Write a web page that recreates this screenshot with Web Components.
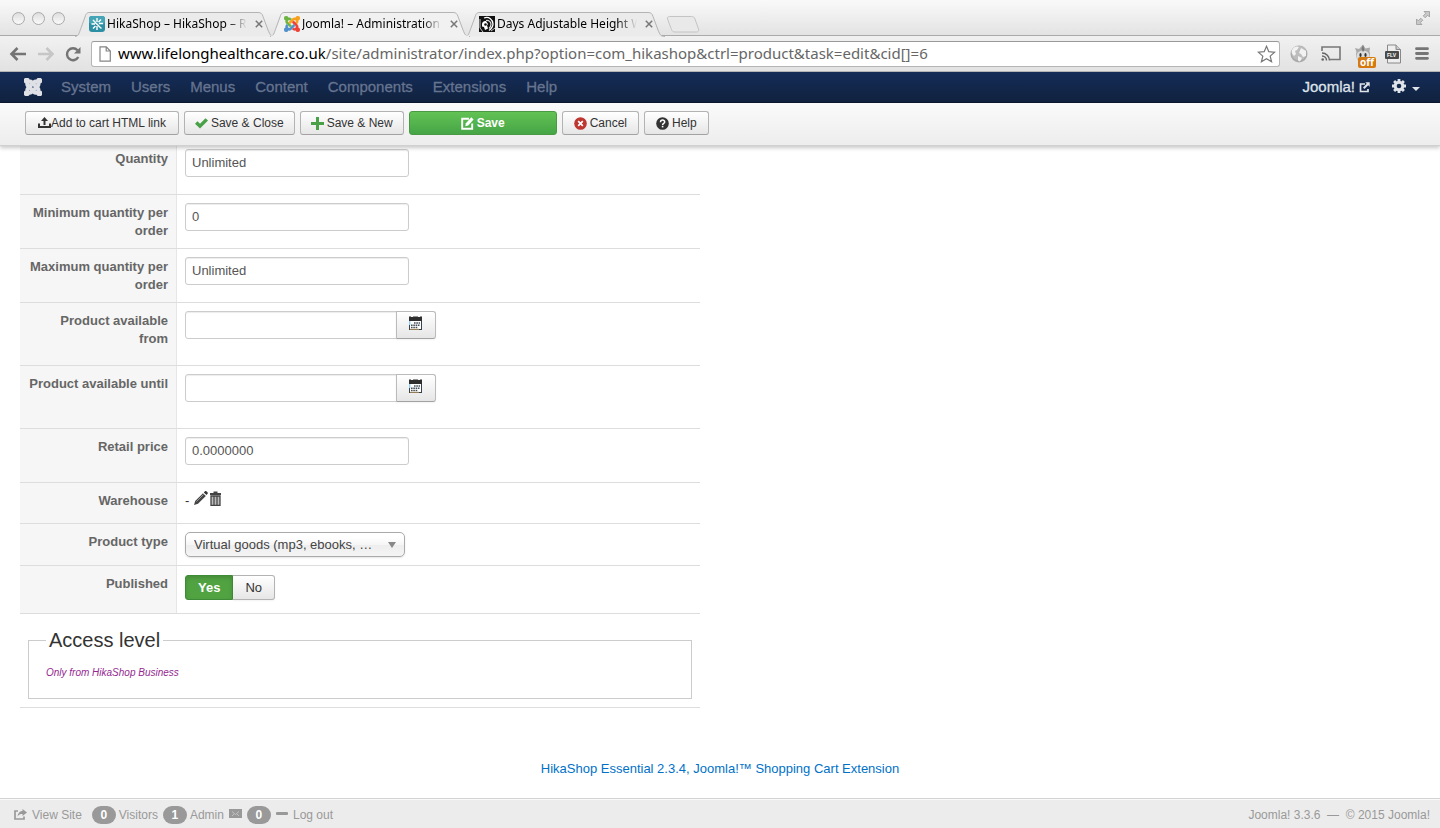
<!DOCTYPE html>
<html lang="en">
<head>
<meta charset="utf-8">
<title>Joomla! - Administration - Product</title>
<style>
body{margin:0;background:#fff;color:#333;font:13px/18px "Liberation Sans",Arial,sans-serif}
</style>
</head>
<body>
<admin-window></admin-window>
<script>
const J = [
  'M.6 92.1C.6 58.8 27.4 32 60.4 32c30 0 54.5 21.9 59.2 50.2 32.6-7.6 67.1.6 96.5 30l-44.3 44.3c-20.5-20.5-42.6-16.3-55.4-3.5-14.3 14.3-14.3 37.9 0 52.2l99.5 99.5-44 44.3c-87.7-87.2-49.7-49.7-99.8-99.7-26.8-26.5-35-64.8-24.8-98.9C20.4 144.6.6 120.7.6 92.1z',
  'M130.1 208.5l44.3 44.3c10-10 89.7-89.7 99.7-99.8 14.3-14.3 37.6-14.3 51.9 0 12.8 12.8 17 35-3.5 55.4l44 44.3c31.2-31.2 38.5-67.6 28.9-101.2 29.2-4.1 51.9-29.2 51.9-59.5 0-33.2-26.8-60.1-59.8-60.1-30.3 0-55.4 22.5-59.5 51.6-33.8-9.9-71.7-1.5-98.3 25.1-18.3 19.1-71.1 71.5-99.6 99.9z',
  'M396.4 360.7c8.2-32.7-.9-68.5-26.3-93.9-11.8-12.2 5 4.7-99.5-99.7l-44.3 44.3 99.7 99.7c14.3 14.3 14.3 37.6 0 51.9-12.8 12.8-35 17-55.4-3.5l-44 44.3c27.6 30.2 68 38.8 102.7 28 5.5 27.4 29.7 48.1 58.9 48.1 33 0 59.8-26.8 59.8-60.1 0-30.2-22.5-55-51.6-59.1z',
  'M312.1 307.6l-44-44.3c-87 86.4-50.4 50.4-99.7 99.8-14.3 14.3-37.6 14.3-51.9 0-13.1-13.4-16.9-35.3 3.2-55.4l-44-44.3c-30.2 30.2-38 65.2-29.5 98.3-26.7 6-46.2 29.9-46.2 58.2C0 453.2 26.8 480 59.8 480c28.6 0 52.5-19.8 58.6-46.7 32.7 8.2 68.5-.6 94.2-26 32.1-32 12.2-12.4 99.5-99.7z'];
const joomla = (c, w) => J.map((d, i) => `<path fill="${c[i]}" stroke="${c[i]}" stroke-width="${w}" d="${d}"/>`).join('');

/* name: [viewBox, width, height, markup] */
const ICONS = {
  joomla: ['-12 20 472 472', 18, 18, joomla(['#dfe1e6', '#dfe1e6', '#dfe1e6', '#dfe1e6'], 42)],
  'fav-joomla': ['0 32 448 448', 16, 16, joomla(['#6cb33f', '#f9a01b', '#ee4035', '#4f8fcc'], 12)],
  'fav-hika': ['0 0 16 16', 16, 16, '<rect width="16" height="16" rx="3" fill="#2d8fa3"/><rect width="16" height="8" rx="3" fill="#45a5b7"/><path d="M8 2v4M8 10v4M2.500 8H6M10 7.500h4M4 4l2.500 2.500M12 3.500L9.500 6M4 12.500L6.500 10M9.500 10l3 2.500M6 6.500l4 3.500" stroke="#fff" stroke-width="1.400" fill="none"/>'],
  'fav-days': ['0 0 16 16', 16, 16, '<rect width="16" height="16" fill="#111"/><path d="M5 2c5-2 9 2 9 6 0 3-2 5-4 6.500" stroke="#fff" stroke-width="1.300" fill="none"/><path d="M7 4.500c3-.5 5 1.500 5 4 0 2-1 3-2 4" stroke="#ddd" stroke-width="1.200" fill="none"/><path d="M3 8c0-2 2-3.500 4-3l2 3-1 1.500 1 3-3 1.500-1-3-2-.5z" fill="#fff"/><circle cx="6.500" cy="8.500" r="1.300" fill="#111"/><path d="M1 3v9l3 4M12 15l4-3" stroke="#ccc" stroke-width="1" fill="none"/>'],
  back: ['0 0 18 16', 18, 16, '<path d="M2.500 8H17M8.500 2L2.500 8l6 6" fill="none" stroke="#747474" stroke-width="2.600"/>'],
  forward: ['0 0 18 16', 18, 16, '<path d="M1 8h14.500M9.500 2l6 6-6 6" fill="none" stroke="#c6c6c6" stroke-width="2.600"/>'],
  reload: ['0 0 16 16', 16, 16, '<path d="M13.300 11A6 6 0 1 1 12.500 4.200" fill="none" stroke="#747474" stroke-width="2.400"/><path d="M15.500 1v6.500H9z" fill="#747474"/>'],
  page: ['0 0 12 16', 12, 16, '<path d="M1 .8h6.300L11.300 5v10.200H1zM7.200.8V5h4" fill="#fff" stroke="#858585" stroke-width="1.200"/>'],
  star: ['0 0 19 18', 19, 18, '<path d="M9.500 1.300l2.300 5.400 5.900.5-4.500 3.900 1.400 5.700-5.100-3-5.100 3 1.400-5.700L1.300 7.200l5.900-.5z" fill="#fff" stroke="#777" stroke-width="1.200"/>'],
  globe: ['0 0 18 18', 18, 18, '<circle cx="9" cy="9" r="8.500" fill="#aaa"/><circle cx="9" cy="8" r="7.300" fill="#bdbdbd"/><path d="M2 5c2-4 5-4 7-3L7 5 5 6l1 3-2 2C2 9 1 7 2 5zM11 3l5 3v5l-3 1-2-3-2-1zM8 11l4 2-2 3.500-2-1z" fill="#f2f2f2"/>'],
  cast: ['0 0 20 15', 20, 15, '<path d="M1 5V1h18v12.500H9" fill="none" stroke="#777" stroke-width="1.600"/><path d="M1 7a7.500 7.500 0 0 1 7.500 7.500M1 10a4.500 4.500 0 0 1 4.500 4.500" fill="none" stroke="#666" stroke-width="1.500"/><circle cx="1.700" cy="13.500" r="1.300" fill="#666"/>'],
  ghost: ['0 0 18 20', 18, 20, '<path d="M9 .5l2.500 4L16 3.500l-.5 4c2 5-1.500 11-6.500 11S.5 12.500 2.500 8L1 4l4 1z" fill="#a9a9a9"/><ellipse cx="9" cy="12" rx="6.500" ry="5.500" fill="#dcdcdc"/><path d="M9 1l1.500 5L9 8 7.500 5z" fill="#777"/><ellipse cx="6.500" cy="11" rx="1.100" ry="2" fill="#333"/><ellipse cx="11.500" cy="11" rx="1.100" ry="2" fill="#333"/>'],
  flv: ['0 0 17 20', 17, 20, '<path d="M2.500 1h8.500l4.500 4.500V19h-13z" fill="#eee" stroke="#888"/><path d="M11 1v4.500h4.500" fill="#ccc" stroke="#888"/><rect y="7" width="14" height="8" rx="1" fill="#4a4a4a"/>'],
  menu: ['0 0 14 13', 14, 13, '<path d="M1.500 1.700h11M1.500 6.500h11M1.500 11.300h11" stroke="#757575" stroke-width="2.800" stroke-linecap="round"/>'],
  expand: ['0 0 16 16', 16, 16, '<path d="M9 1.500h5.500V7l-1.800-1.800-2.500 2.600-2-2 2.600-2.500zM7 14.500H1.500V9l1.800 1.800 2.500-2.600 2 2-2.600 2.500z" fill="#c9c9c9" stroke="#999" stroke-width=".8"/>'],
  close: ['0 0 8 8', 8, 8, '<path d="M.8.8l6.400 6.400M7.200.8L.8 7.200" stroke="#777" stroke-width="1.500"/>'],
  external: ['0 0 11 11', 11, 11, '<path d="M6 2H1.500v7.500H9V7" fill="none" stroke="#dfe3ea" stroke-width="1.700"/><path d="M6.300.3h4.400v4.400L9.200 3.200 5.500 7 4 5.500l3.700-3.700z" fill="#dfe3ea"/>'],
  gear: ['0 0 14 14', 14, 14, '<path d="M7 0v14M0 7h14M2.100 2.100l9.800 9.800M11.900 2.100l-9.800 9.800" stroke="#dfe3ea" stroke-width="2.800"/><circle cx="7" cy="7" r="3.900" fill="none" stroke="#dfe3ea" stroke-width="2.900"/><circle cx="7" cy="7" r="2.300" fill="#13294e"/>'],
  caret: ['0 -2 8 8', 8, 8, '<path d="M0 0h8L4 4z" fill="#dfe3ea"/>'],
  upload: ['0 0 13 12', 13, 12, '<path d="M6.500 0L10 4H7.500v4h-2V4H3zM0 6.500h2V9h9V6.500h2V11H0z" fill="#333"/>'],
  check: ['0 0 13 11', 13, 11, '<path d="M0 5.800L2.500 3.200 5 5.800 10.500.3 13 2.500 5 10.500z" fill="#48a047"/>'],
  plus: ['0 0 13 13', 13, 13, '<path d="M5 0h3v5h5v3H8v5H5V8H0V5h5z" fill="#48a047"/>'],
  edit: ['0 0 13 13', 13, 13, '<path d="M8 1.800H1.200v10h10V6.500" fill="none" stroke="#fff" stroke-width="1.900"/><path d="M10.300.3l2.300 2.300-5.400 5.800-3 .9.700-3z" fill="#fff"/>'],
  cancel: ['0 0 13 13', 13, 13, '<circle cx="6.500" cy="6.500" r="6.300" fill="#bd362f"/><path d="M4.200 4.200l4.600 4.600M8.800 4.200L4.200 8.800" stroke="#fff" stroke-width="1.700"/>'],
  help: ['0 0 13 13', 13, 13, '<circle cx="6.500" cy="6.500" r="6.300" fill="#333"/><path d="M4.500 5.200c0-2.800 4.200-2.700 4.200-.3 0 1.500-2.100 1.500-2.100 3" fill="none" stroke="#fff" stroke-width="1.500"/><rect x="5.800" y="8.800" width="1.600" height="1.600" fill="#fff"/>'],
  calendar: ['0 0 13 14', 13, 14, '<rect x=".5" y="3" width="12" height="10.500" fill="#fff" stroke="#38424f"/><path d="M0 .5h2v.5h2V.5h5v.5h2V.5h2V5H0z" fill="#2e2e2e"/><path d="M2 11.500h7M2 9.300h9M5 7h6" stroke="#43505c" stroke-width="1.600" stroke-dasharray="1.600 .7"/><path d="M.7 5v4" stroke="#8fcdf4" stroke-width="1.400"/><path d="M1 13.300h9" stroke="#c9a25e" stroke-width=".8"/>'],
  pencil: ['0 0 14 14', 14, 14, '<path d="M0 14l1.200-4L9 2.200 11.800 5 4 12.800z" fill="#444"/><path d="M9.800 1.400L11 .3c1-.8 3.400 1.200 2.600 2.500l-1.100 1.300z" fill="#333"/><path d="M2.500 10.500l7-7" stroke="#999"/>'],
  trash: ['0 0 11 15', 11, 15, '<path d="M0 2h3.500V.5h4V2H11v2H0z" fill="#444"/><path d="M1 5h9v9.500H1z" fill="#bbb" stroke="#444" stroke-width="1.300"/><path d="M4 5v9M7 5v9" stroke="#444" stroke-width="1.200"/>'],
  share: ['0 0 13 11', 13, 11, '<path d="M4 2H1v8h9V7.500" fill="none" stroke="#999" stroke-width="1.700"/><path d="M8.500 0L13 3.500 8.500 7V5C6 5 5 5.500 3.500 7.500 3.800 4 6 2 8.500 2z" fill="#999"/>'],
  mail: ['0 0 13 11', 13, 11, '<rect width="13" height="9" fill="#999"/><path d="M3 2.500l3.500 3 3.500-3M3 7l2-2M10 7L8 5" fill="none" stroke="#ccc" stroke-width=".8"/>'],
  dash: ['0 0 12 5', 12, 5, '<rect width="12" height="3" rx="1" fill="#999"/>']
};

function component(name, css, html) {
  customElements.define(name, class extends HTMLElement {
    connectedCallback() {
      if (this.shadowRoot) return;
      const t = document.createElement('template');
      t.innerHTML = `<style>*{box-sizing:border-box}${css}</style>${typeof html === 'function' ? html(this) : html}`;
      this.attachShadow({ mode: 'open' }).append(t.content.cloneNode(true));
    }
  });
}

component('ui-icon', ':host{display:inline-block;flex:none;line-height:0}svg{display:block}', el => {
  const [box, w, h, body] = ICONS[el.getAttribute('name')];
  return `<svg viewBox="${box}" width="${w}" height="${h}" aria-hidden="true">${body}</svg>`;
});

/* ---------- browser chrome ---------- */
component('browser-tab', `
:host{display:flex;align-items:center;position:relative;width:200px;height:24px;padding:0 12px 0 14px;margin-right:-5px;color:#000;font:12px/16px "Noto Sans",sans-serif}
:host([active]){z-index:1}
.shape{position:absolute;left:0;top:0}
ui-icon,span,button{position:relative}
span{flex:1;min-width:0;margin:0 8px 0 2px;overflow:hidden;white-space:nowrap;-webkit-mask:linear-gradient(90deg,#000 86%,transparent);mask:linear-gradient(90deg,#000 86%,transparent)}
button{display:flex;border:0;background:none;padding:0}`,
el => {
  const a = el.hasAttribute('active');
  return `<svg class="shape" width="200" height="25" viewBox="0 0 200 25" aria-hidden="true"><path d="M0 24.500C4 24 4 21 6 16L10 5C11 1.500 12 .5 15 .5H183c3 0 4 1 5 4L193 18c2 5 3 6.500 7 6.500" fill="${a ? '#f1f1f1' : '#ebebeb'}" stroke="#b4b4b4"/>${a ? '<path d="M1 24.500h198" stroke="#f1f1f1" stroke-width="2"/>' : ''}</svg>
  <ui-icon name="${el.getAttribute('icon')}"></ui-icon><span><slot></slot></span><button aria-label="Close tab"><ui-icon name="close"></ui-icon></button>`;
});

component('tab-strip', `
:host{display:flex;align-items:flex-end;height:36px;padding:0 9px 0 12px;background:linear-gradient(#f9f9f9,#e3e3e3);border-bottom:1px solid #aaa;box-sizing:border-box}
.lights{display:flex;gap:7px;align-self:center;margin:2px 10px 0 0}
.lights i{width:13px;height:13px;border:1px solid #aaa;border-radius:50%;background:linear-gradient(#dedede,#fafafa)}
.tabs{display:flex;flex:1;margin-bottom:-1px;align-items:center}
.new{margin-left:6px}
.expand{align-self:center}`,
`<div class="lights"><i></i><i></i><i></i></div>
<div class="tabs">
<browser-tab icon="fav-hika">HikaShop – HikaShop – Report</browser-tab>
<browser-tab icon="fav-joomla" active>Joomla! – Administration – Joomla</browser-tab>
<browser-tab icon="fav-days">Days Adjustable Height Wheel</browser-tab>
<svg class="new" width="34" height="17" viewBox="0 0 34 17" aria-hidden="true"><path d="M3.500.5h22c2 0 3 1 3.500 2.500l3.500 10c.5 2-.5 3-2 3H9c-2 0-3-1-3.500-2.500L1.500 3C1 1.500 2 .5 3.500.5z" fill="#e9e9e9" stroke="#c4c4c4"/></svg>
</div><ui-icon class="expand" name="expand"></ui-icon>`);

component('address-bar', `
:host{display:flex;align-items:center;height:36px;padding:0 11px 0 9px;background:linear-gradient(#f1f1f1,#e2e2e2);border-bottom:1px solid #b4b4b4;box-sizing:border-box}
button{border:0;background:none;padding:0;margin:0 10px 0 0;position:relative;display:flex}
.url{display:flex;align-items:center;flex:1;height:26px;padding:0 3px 0 7px;border:1px solid #b5b5b5;border-top-color:#999;border-radius:3px;background:#fff;margin-right:10px}
.url p{flex:1;margin:0 0 0 7px;padding-bottom:1px;font:15px/22px "Noto Sans",sans-serif;color:#666;white-space:nowrap;overflow:hidden}
b{font-weight:400;color:#000}
.tools{display:flex;gap:13px}
.tools button{margin:0;height:20px;align-items:center}
.badge{position:absolute;left:4px;bottom:-4px;padding:0 2px;border-radius:2px;background:#d57a10;color:#fff;font:bold 10px/11px "Open Sans",sans-serif}
.flv{position:absolute;left:2px;top:8px;color:#fff;font:bold 5px/6px "Liberation Sans",sans-serif}`,
`<button aria-label="Back"><ui-icon name="back"></ui-icon></button>
<button aria-label="Forward"><ui-icon name="forward"></ui-icon></button>
<button aria-label="Reload"><ui-icon name="reload"></ui-icon></button>
<div class="url"><ui-icon name="page"></ui-icon><p><b>www.lifelonghealthcare.co.uk</b>/site/administrator/index.php?option=com_hikashop&amp;ctrl=product&amp;task=edit&amp;cid[]=6</p><ui-icon name="star"></ui-icon></div>
<div class="tools">
<button aria-label="Globe"><ui-icon name="globe"></ui-icon></button>
<button aria-label="Cast"><ui-icon name="cast"></ui-icon></button>
<button><ui-icon name="ghost"></ui-icon><span class="badge">off</span></button>
<button><ui-icon name="flv"></ui-icon><span class="flv">FLV</span></button>
<button aria-label="Menu"><ui-icon name="menu"></ui-icon></button>
</div>`);

/* ---------- Joomla administration ---------- */
component('admin-nav', `
:host{display:flex;align-items:center;height:31px;padding:0 20px 0 24px;background:linear-gradient(#152c58,#10223e);border-bottom:1px solid #0c192e;box-sizing:border-box;font-size:15px;line-height:20px}
nav{display:flex;gap:20px;margin-left:19px}
a{color:#66748f;-webkit-text-stroke:.3px currentColor;text-decoration:none}
.site{display:flex;align-items:center;gap:4px;margin-left:auto;color:#dfe3ea}
.set{display:flex;align-items:center;gap:6px;margin-left:22px;border:0;padding:0 0 2px;background:none}
.set :last-child{align-self:flex-end}`,
`<ui-icon name="joomla"></ui-icon>
<nav>${['System', 'Users', 'Menus', 'Content', 'Components', 'Extensions', 'Help'].map(t => `<a href="#">${t}</a>`).join('')}</nav>
<a class="site" href="#">Joomla! <ui-icon name="external"></ui-icon></a>
<button class="set" aria-label="Settings"><ui-icon name="gear"></ui-icon><ui-icon name="caret"></ui-icon></button>`);

component('tool-button', `
:host{display:block}
button{display:flex;align-items:center;justify-content:center;gap:3px;width:100%;height:24px;padding:0 10px;border:1px solid #b3b3b3;border-bottom-color:#a2a2a2;border-radius:3px;background:linear-gradient(#fff,#e6e6e6);color:#333;font:12px/18px "Liberation Sans",sans-serif;white-space:nowrap}
:host([roomy]) button{padding:0 11px}
:host([tight]) button{gap:0;padding:0 12px}
:host([primary]) button{background:linear-gradient(#62c254,#46a546);border-color:#4a9a45;color:#fff;font-weight:bold}`,
el => `<button><ui-icon name="${el.getAttribute('icon')}"></ui-icon><slot></slot></button>`);

component('action-bar', `
:host{display:flex;gap:5px;position:relative;z-index:1;height:43px;padding:8px 25px;background:linear-gradient(#fafafa,#ededed);border-bottom:1px solid #d0d0d0;box-shadow:0 2px 4px rgba(0,0,0,.22);box-sizing:border-box}
[primary]{width:148px}`,
`<tool-button icon="upload" tight>Add to cart HTML link</tool-button>
<tool-button icon="check">Save &amp; Close</tool-button>
<tool-button icon="plus">Save &amp; New</tool-button>
<tool-button icon="edit" primary>Save</tool-button>
<tool-button icon="cancel" roomy>Cancel</tool-button>
<tool-button icon="help" roomy>Help</tool-button>`);

const ROW = `
:host{display:grid;grid-template-columns:157px 1fr;border-bottom:1px solid #ddd}
.name{padding:9px 8px 7px;background:#f6f6f6;border-right:1px solid #e6e6e6;color:#666;font-weight:bold;text-align:right}
.cell{padding:8px}
input[type=text]{display:block;width:224px;height:28px;padding:0 6px 2px;border:1px solid #ccc;border-radius:3px;background:#fff;box-shadow:inset 0 1px 1px rgba(0,0,0,.075);color:#555;font:13px/18px "Liberation Sans",sans-serif}`;

component('text-field', ROW + '.cell{padding-bottom:17px}',
  el => `<label class="name" for="f">${el.getAttribute('label')}</label><div class="cell"><input id="f" type="text" value="${el.getAttribute('value')}"></div>`);

component('date-field', ROW + `.cell{display:flex;padding-bottom:26px}
input[type=text]{width:212px;border-radius:3px 0 0 3px}
button{width:40px;height:28px;margin-left:-1px;padding:0 2px 4px 0;display:flex;align-items:center;justify-content:center;border:1px solid #bbb;border-bottom-color:#a2a2a2;border-radius:0 3px 3px 0;background:linear-gradient(#fff,#e6e6e6);box-shadow:0 1px 2px rgba(0,0,0,.05)}`,
  el => `<label class="name" for="f">${el.getAttribute('label')}</label><div class="cell"><input id="f" type="text"><button aria-label="Pick a date"><ui-icon name="calendar"></ui-icon></button></div>`);

component('warehouse-field', ROW + `.cell{display:flex;align-items:flex-start;gap:2px;height:40px}
button{border:0;background:none;padding:0}
span{margin-right:3px;padding-top:1px}`,
  el => `<div class="name">${el.getAttribute('label')}</div><div class="cell"><span>-</span><button aria-label="Edit"><ui-icon name="pencil"></ui-icon></button><button aria-label="Delete"><ui-icon name="trash"></ui-icon></button></div>`);

component('select-field', ROW + `.wrap{position:relative;width:220px}
select{display:block;appearance:none;width:100%;height:25px;padding:0 30px 0 8px;border:1px solid #aaa;border-radius:5px;background:linear-gradient(#fff 20%,#f6f6f6 50%,#eee 52%,#f4f4f4);box-shadow:0 1px 2px rgba(0,0,0,.1);color:#444;font:13px/18px "Liberation Sans",sans-serif;text-overflow:ellipsis}
svg{position:absolute;right:9px;top:10px;pointer-events:none}`,
  el => `<label class="name" for="f">${el.getAttribute('label')}</label><div class="cell"><div class="wrap"><select id="f"><option>${el.getAttribute('value')}</option></select><svg width="8" height="6" viewBox="0 0 8 6" aria-hidden="true"><path d="M0 0h8L4 6z" fill="#888"/></svg></div></div>`);

component('toggle-field', ROW + `.cell{display:flex;padding:9px 8px 13px}
input{position:absolute;opacity:0;margin:0;width:1px;height:1px}
.o{height:25px;padding:0 12px;border:1px solid #b3b3b3;background:linear-gradient(#fff,#e6e6e6);line-height:23px;color:#333;box-shadow:0 1px 2px rgba(0,0,0,.05)}
.o:first-of-type{border-radius:3px 0 0 3px}
.o:last-of-type{border-radius:0 3px 3px 0;border-left:0}
input:checked+.o{background:#51a342;border-color:#3f8a36;color:#fff;font-weight:bold;box-shadow:inset 0 2px 4px rgba(0,0,0,.15)}`,
  el => `<div class="name" id="n">${el.getAttribute('label')}</div><div class="cell" role="radiogroup" aria-labelledby="n"><input type="radio" name="p" id="y" checked><label class="o" for="y">Yes</label><input type="radio" name="p" id="x"><label class="o" for="x">No</label></div>`);

component('access-level', `
:host{display:block;padding:14px 8px 8px;border-bottom:1px solid #ddd}
fieldset{margin:0;padding:12px 17px 16px;border:1px solid #ccc}
legend{padding:0 3px;font-size:20px;line-height:24px;color:#333}
a{display:block;color:#93278f;font-style:italic;font-size:10px;line-height:18px;text-decoration:none}`,
`<fieldset><legend>Access level</legend><a href="#">Only from HikaShop Business</a></fieldset>`);

component('status-bar', `
:host{display:flex;align-items:center;height:30px;margin-top:auto;padding:2px 10px 0 14px;background:#ececec;border-top:1px solid #d4d4d4;box-shadow:inset 0 1px #fafafa;box-sizing:border-box;color:#999;font-size:12px;line-height:18px}
a{display:flex;align-items:center;gap:5px;color:inherit;text-decoration:none}
b{min-width:24px;height:18px;padding:0 8px;border-radius:9px;background:#999;color:#fff;text-align:center}
.group{display:flex;align-items:center;gap:5px;margin-left:5px}
.first{margin-left:10px}
.group b:first-child{margin-right:-2px}
.end{margin-left:auto;white-space:pre}`,
`<a href="#"><ui-icon name="share"></ui-icon>View Site</a>
<div class="group first"><b>0</b><span>Visitors</span></div>
<div class="group"><b>1</b><span>Admin</span><ui-icon name="mail"></ui-icon><b>0</b></div>
<a class="group" href="#"><ui-icon name="dash"></ui-icon>Log out</a>
<span class="end">Joomla! 3.3.6  —  © 2015 Joomla!</span>`);

component('admin-window', `
:host{display:flex;flex-direction:column;min-height:100vh}
main{display:grid;grid-template-columns:1fr 1fr;gap:40px;padding:0 20px;margin-top:-5px}
footer{margin:52px 0 20px;text-align:center}
footer a{color:#0071c7;text-decoration:none}`,
`<tab-strip></tab-strip><address-bar></address-bar><admin-nav></admin-nav><action-bar></action-bar>
<main><form>
<text-field label="Quantity" value="Unlimited"></text-field>
<text-field label="Minimum quantity per order" value="0"></text-field>
<text-field label="Maximum quantity per order" value="Unlimited"></text-field>
<date-field label="Product available from"></date-field>
<date-field label="Product available until"></date-field>
<text-field label="Retail price" value="0.0000000"></text-field>
<warehouse-field label="Warehouse"></warehouse-field>
<select-field label="Product type" value="Virtual goods (mp3, ebooks, …"></select-field>
<toggle-field label="Published"></toggle-field>
<access-level></access-level>
</form></main>
<footer><a href="#">HikaShop Essential 2.3.4, Joomla!™ Shopping Cart Extension</a></footer>
<status-bar></status-bar>`);
</script>
</body>
</html>
